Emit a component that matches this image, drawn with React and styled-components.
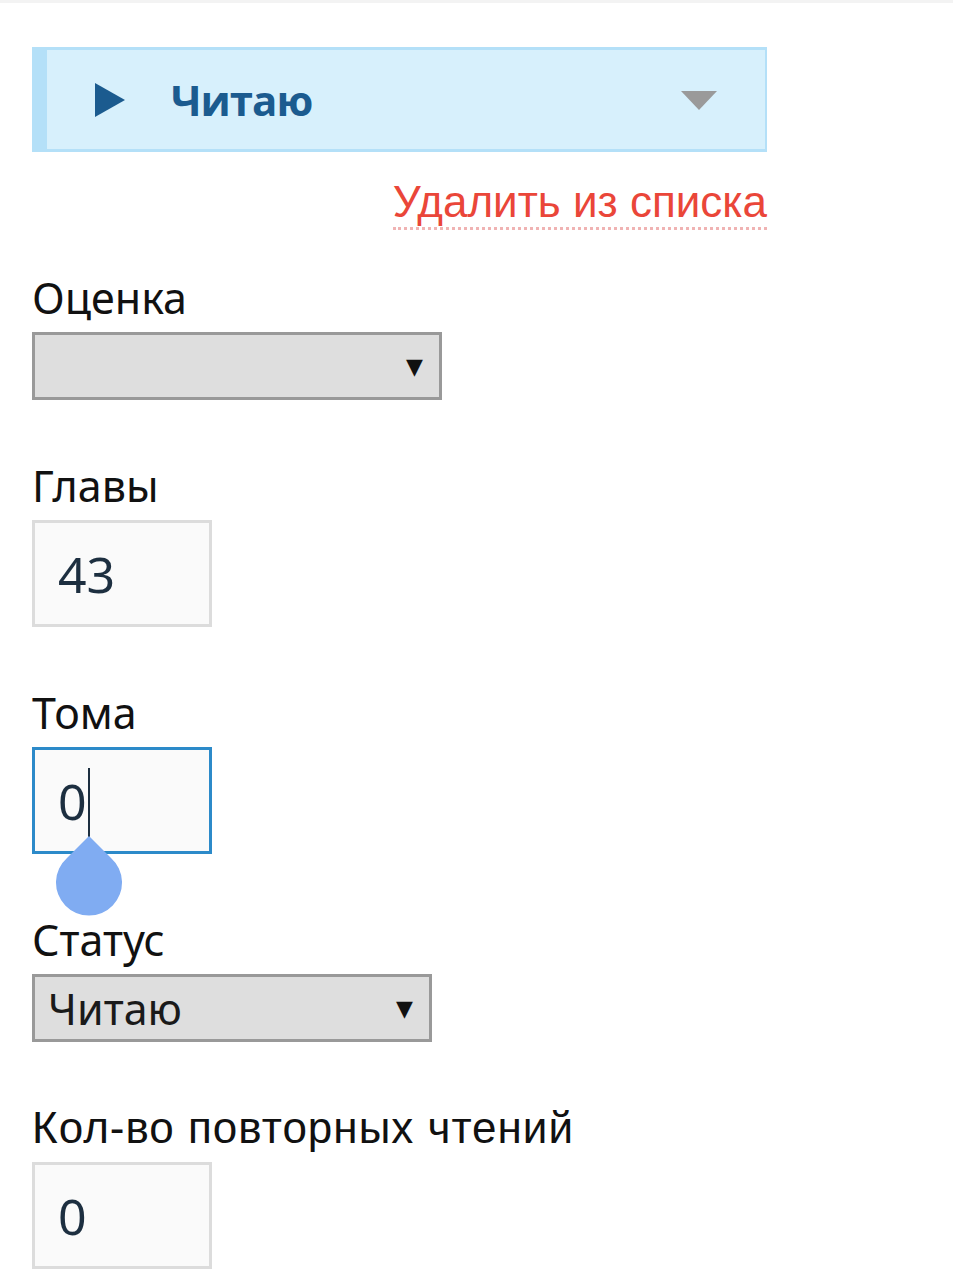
import styled, { createGlobalStyle } from 'styled-components';

const GlobalStyle = createGlobalStyle`
  body {
    margin: 0;
    background: #fff;
    font-family: 'Open Sans', 'Noto Sans', sans-serif;
  }
`;

function PlayIcon() {
  return (
    <svg width="30" height="34" viewBox="0 0 30 34">
      <polygon points="0,0 30,17 0,34" fill="#1b5b8f" />
    </svg>
  );
}

function CaretDown({ color = '#999', w = 36, h = 20 }) {
  return (
    <svg width={w} height={h} viewBox="0 0 36 20">
      <polygon points="0,1 36,1 18,20" fill={color} strokeLinejoin="round" />
    </svg>
  );
}

function Handle() {
  return (
    <svg width="68" height="80" viewBox="0 0 68 80">
      <path d="M34 0 L12 22 A33 33 0 1 0 56 22 Z" fill="#80acf2" />
    </svg>
  );
}

function App() {
  return (
    <>
      <GlobalStyle />
      <TopLine />
      <Page>
        <StatusBanner>
          <BannerLeft>
            <PlayIcon />
            <BannerTitle>Читаю</BannerTitle>
          </BannerLeft>
          <CaretDown color="#9a9a9a" />
        </StatusBanner>

        <LinkRow>
          <RemoveLink>Удалить из списка</RemoveLink>
        </LinkRow>

        <Field first>
          <Label>Оценка</Label>
          <Select width={410}>
            <span />
            <SelectArrow>▼</SelectArrow>
          </Select>
        </Field>

        <Field>
          <Label>Главы</Label>
          <NumberBox>43</NumberBox>
        </Field>

        <Field>
          <Label>Тома</Label>
          <NumberBox focused>
            0<Cursor />
            <HandleWrap>
              <Handle />
            </HandleWrap>
          </NumberBox>
        </Field>

        <Field>
          <Label>Статус</Label>
          <Select width={400}>
            <SelectValue>Читаю</SelectValue>
            <SelectArrow>▼</SelectArrow>
          </Select>
        </Field>

        <Field>
          <Label arial>Кол-во повторных чтений</Label>
          <NumberBox>0</NumberBox>
        </Field>
      </Page>
    </>
  );
}

const TopLine = styled.div`
  height: 3px;
  background: #f3f3f3;
`;

const Page = styled.div`
  padding: 44px 0 40px 32px;
  width: 735px;
`;

const StatusBanner = styled.div`
  height: 105px;
  box-sizing: border-box;
  display: flex;
  align-items: center;
  justify-content: space-between;
  background: #d7f0fc;
  border: 3px solid #b4e0f8;
  border-left: 15px solid #b4e0f8;
  border-right-width: 2px;
  padding: 0 48px 0 48px;
`;

const BannerLeft = styled.div`
  display: flex;
  align-items: center;
  gap: 46px;
`;

const BannerTitle = styled.span`
  font-family: 'Open Sans', sans-serif;
  font-weight: 700;
  font-size: 42px;
  color: #1b5b8f;
  letter-spacing: -1px;
`;

const LinkRow = styled.div`
  display: flex;
  justify-content: flex-end;
  margin-top: 26px;
`;

const RemoveLink = styled.a`
  font-family: 'Liberation Sans', Arial, sans-serif;
  font-size: 44px;
  line-height: 48px;
  color: #ea4639;
  border-bottom: 3px dotted #f0b3b3;
  padding-bottom: 1px;
  cursor: pointer;
`;

const Field = styled.div`
  margin-top: ${(p) => (p.first ? '44px' : '62px')};
  display: flex;
  flex-direction: column;
  align-items: flex-start;
`;

const Label = styled.div`
  font-family: ${(p) =>
    p.arial ? "'Liberation Sans', Arial, sans-serif" : "'Noto Sans', 'Open Sans', sans-serif"};
  font-size: ${(p) => (p.arial ? '44px' : '43px')};
  letter-spacing: ${(p) => (p.arial ? '1px' : '0')};
  line-height: 48px;
  color: #111;
  margin-bottom: 10px;
`;

const Select = styled.div`
  width: ${(p) => p.width}px;
  height: 68px;
  box-sizing: border-box;
  background: #dedede;
  border: 3px solid #999;
  display: flex;
  align-items: center;
  justify-content: space-between;
  padding: 0 16px 0 13px;
`;

const SelectValue = styled.span`
  font-family: 'Noto Sans', sans-serif;
  font-size: 43px;
  color: #1a1a1a;
`;

const SelectArrow = styled.span`
  font-family: 'DejaVu Sans', sans-serif;
  font-size: 22px;
  color: #111;
`;

const NumberBox = styled.div`
  position: relative;
  width: 180px;
  height: 107px;
  box-sizing: border-box;
  background: #fafafa;
  border: ${(p) => (p.focused ? '3px solid #2c8ac9' : '3px solid #dcdcdc')};
  display: flex;
  align-items: center;
  padding-left: 23px;
  font-family: 'Noto Sans', 'Open Sans', sans-serif;
  font-size: 50px;
  color: #1d2f40;
`;

const Cursor = styled.span`
  display: inline-block;
  width: 2px;
  height: 70px;
  background: #1d2f40;
  margin-left: 1px;
  margin-top: 4px;
`;

const HandleWrap = styled.div`
  position: absolute;
  left: 20px;
  top: 86px;
  line-height: 0;
`;

export default App;
